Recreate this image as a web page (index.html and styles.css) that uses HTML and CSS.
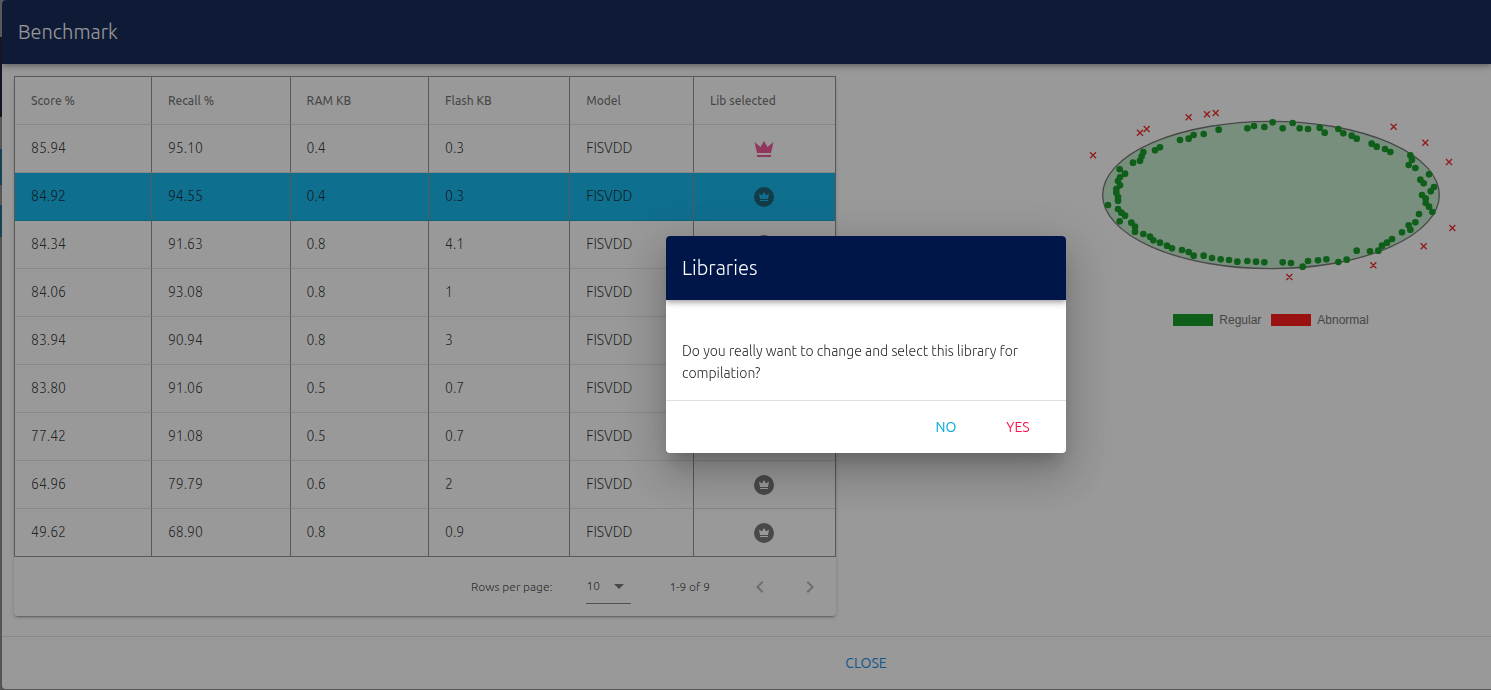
FILE: index.html
```html
<!DOCTYPE html>
<html lang="en">
<head>
<meta charset="utf-8">
<title>Benchmark</title>
<link rel="stylesheet" href="styles.css">
</head>
<body>
<svg class="sprite" aria-hidden="true">
  <symbol id="crown" viewBox="0 0 24 24"><path d="M5 16 2.500 5 8.500 10 12 4 15.500 10 21.500 5 19 16ZM5 18H19V20H5Z"/></symbol>
  <symbol id="crown-circle" viewBox="0 0 24 24"><path fill-rule="evenodd" d="M12 2A10 10 0 1 1 12 22A10 10 0 1 1 12 2ZM8 14H16L17 8.500 14 10.500 12 7 10 10.500 7 8.500ZM8 15V16H16V15Z"/></symbol>
</svg>
<main class="page">
  <section class="dialog">
    <header class="bar"><h1 class="title">Benchmark</h1></header>
    <div class="content">
      <div class="card">
        <table class="grid">
          <colgroup><col class="c1"><col class="c2"><col class="c3"><col class="c4"><col class="c5"><col class="c6"></colgroup>
          <thead><tr><th>Score %</th><th>Recall %</th><th>RAM KB</th><th>Flash KB</th><th>Model</th><th>Lib selected</th></tr></thead>
          <tbody>
            <tr><td>85.94</td><td>95.10</td><td>0.4</td><td>0.3</td><td>FISVDD</td><td class="pick"><svg class="icon chosen"><use href="#crown"/></svg></td></tr>
            <tr class="active"><td>84.92</td><td>94.55</td><td>0.4</td><td>0.3</td><td>FISVDD</td><td class="pick"><svg class="icon"><use href="#crown-circle"/></svg></td></tr>
            <tr><td>84.34</td><td>91.63</td><td>0.8</td><td>4.1</td><td>FISVDD</td><td class="pick"><svg class="icon"><use href="#crown-circle"/></svg></td></tr>
            <tr><td>84.06</td><td>93.08</td><td>0.8</td><td>1</td><td>FISVDD</td><td class="pick"><svg class="icon"><use href="#crown-circle"/></svg></td></tr>
            <tr><td>83.94</td><td>90.94</td><td>0.8</td><td>3</td><td>FISVDD</td><td class="pick"><svg class="icon"><use href="#crown-circle"/></svg></td></tr>
            <tr><td>83.80</td><td>91.06</td><td>0.5</td><td>0.7</td><td>FISVDD</td><td class="pick"><svg class="icon"><use href="#crown-circle"/></svg></td></tr>
            <tr><td>77.42</td><td>91.08</td><td>0.5</td><td>0.7</td><td>FISVDD</td><td class="pick"><svg class="icon"><use href="#crown-circle"/></svg></td></tr>
            <tr><td>64.96</td><td>79.79</td><td>0.6</td><td>2</td><td>FISVDD</td><td class="pick"><svg class="icon"><use href="#crown-circle"/></svg></td></tr>
            <tr><td>49.62</td><td>68.90</td><td>0.8</td><td>0.9</td><td>FISVDD</td><td class="pick"><svg class="icon"><use href="#crown-circle"/></svg></td></tr>
          </tbody>
        </table>
        <footer class="pager">
          <label for="rows">Rows per page:</label>
          <span class="select"><select id="rows"><option>10</option></select><svg class="caret" viewBox="0 0 10 5"><path d="M0 0H10L5 5Z"/></svg></span>
          <span class="range">1-9 of 9</span>
          <span class="arrows">
            <button class="arrow" aria-label="Previous page" disabled><svg class="icon" viewBox="0 0 24 24"><path d="M15.410 16.580 10.830 12 15.410 7.410 14 6 8 12 14 18Z"/></svg></button>
            <button class="arrow" aria-label="Next page" disabled><svg class="icon" viewBox="0 0 24 24"><path d="M8.590 16.580 13.170 12 8.590 7.410 10 6 16 12 10 18Z"/></svg></button>
          </span>
        </footer>
      </div>
      <figure class="chart">
        <svg class="plot" viewBox="3 0 1140 570" role="img" aria-label="Regular and abnormal samples">
          <ellipse class="region" cx="573" cy="285" rx="505" ry="221"/>
          <path class="dots" d="M416 89h.1M371 102h.1M341 105h.1M326 116h.1M300 120h.1M240 142h.1M225 151h.1M190 156h.1M185 169h.1M180 182h.1M159 188h.1M119 208h.1M135 221h.1M120 232h.1M114 243h.1M120 256h.1M109 267h.1M109 278h.1M114 291h.1M114 302h.1M84 315h.1M114 327h.1M124 338h.1M135 347h.1M119 364h.1M154 368h.1M165 380h.1M165 395h.1M190 402h.1M210 410h.1M220 421h.1M240 428h.1M261 437h.1M276 445h.1M306 450h.1M326 456h.1M341 467h.1M371 467h.1M396 474h.1M422 478h.1M447 480h.1M472 485h.1M502 483h.1M528 485h.1M553 487h.1M502 85h.1M522 78h.1M553 81h.1M578 67h.1M608 85h.1M638 69h.1M659 85h.1M684 87h.1M719 83h.1M734 98h.1M775 87h.1M790 100h.1M815 107h.1M830 116h.1M875 131h.1M890 140h.1M915 147h.1M931 156h.1M991 166h.1M996 179h.1M986 195h.1M1006 204h.1M1047 223h.1M1021 239h.1M1031 250h.1M1062 261h.1M1052 274h.1M1026 285h.1M1037 296h.1M1037 309h.1M1047 320h.1M1057 336h.1M1017 342h.1M1006 367h.1M986 376h.1M991 389h.1M966 397h.1M936 417h.1M921 428h.1M906 437h.1M895 452h.1M870 454h.1M830 452h.1M800 479h.1M775 486h.1M739 478h.1M714 481h.1M684 483h.1M668 500h.1M633 489h.1M608 487h.1"/>
          <path class="marks" d="M30 157l18 18m0-18l-18 18M171 89l18 18m0-18l-18 18M191 78l18 18m0-18l-18 18M317 43l18 18m0-18l-18 18M372 34l18 18m0-18l-18 18M398 30l18 18m0-18l-18 18M932 71l18 18m0-18l-18 18M1027 119l18 18m0-18l-18 18M1098 177l18 18m0-18l-18 18M1108 375l18 18m0-18l-18 18M1022 430l18 18m0-18l-18 18M871 487l18 18m0-18l-18 18M619 522l18 18m0-18l-18 18"/>
        </svg>
        <figcaption class="legend"><span class="key regular">Regular</span><span class="key abnormal">Abnormal</span></figcaption>
      </figure>
    </div>
    <footer class="actions"><button class="btn close">CLOSE</button></footer>
  </section>
</main>
<div class="overlay">
  <section class="modal" role="dialog" aria-labelledby="modal-title">
    <header class="bar"><h2 class="title" id="modal-title">Libraries</h2></header>
    <p class="message">Do you really want to change and select this library for compilation?</p>
    <footer class="modal-actions"><button class="btn no">NO</button><button class="btn yes">YES</button></footer>
  </section>
</div>
</body>
</html>
```
FILE: styles.css
```css
* { box-sizing: border-box; }
body {
  margin: 0;
  font: 300 14px/22px Ubuntu, "Open Sans", "Noto Sans", sans-serif;
  color: rgba(0, 0, 0, .87);
}
button, select { font: inherit; color: inherit; background: none; border: 0; padding: 0; }
.sprite { position: absolute; width: 0; height: 0; }
.page {
  min-height: 100vh;
  padding: 0 0 1px 2px;
  background: linear-gradient(#8a8a8a 37px, #0a1022 37px 117px, #868686 117px 149px, #0a6480 149px 185px, #868686 185px 205px, #0a6480 205px 237px, #808080 237px);
}
.dialog {
  display: flex;
  flex-direction: column;
  min-height: calc(100vh - 1px);
  background: #fff;
  border-radius: 4px 0 0 4px;
  overflow: hidden;
}
.bar {
  display: flex;
  align-items: center;
  height: 64px;
  padding: 0 16px;
  color: #fff;
  background: #001648;
  box-shadow: 0 2px 4px -1px rgba(0, 0, 0, .2), 0 4px 5px rgba(0, 0, 0, .14), 0 1px 10px rgba(0, 0, 0, .12);
}
.title { margin: 0; font-size: 20px; line-height: 28px; font-weight: 300; }
.content {
  flex: 1;
  display: grid;
  grid-template-columns: 822fr 643fr;
  align-items: start;
  padding: 12px 12px 20px;
}
.card {
  border-radius: 4px;
  box-shadow: 0 3px 1px -2px rgba(0, 0, 0, .2), 0 2px 2px rgba(0, 0, 0, .14), 0 1px 5px rgba(0, 0, 0, .12);
}
.grid {
  width: 100%;
  table-layout: fixed;
  border-collapse: separate;
  border-spacing: 0;
  border: 1px solid #8a8a8a;
}
.c1 { width: 16.700%; }
.c2 { width: 16.900%; }
.c3 { width: 16.900%; }
.c4 { width: 17.200%; }
.c5 { width: 15.100%; }
.c6 { width: 17.200%; }
th, td {
  height: 48px;
  padding: 0 16px;
  text-align: left;
  border-right: 1px solid #8a8a8a;
  border-bottom: 1px solid rgba(0, 0, 0, .12);
}
th { font-size: 12px; font-weight: 500; color: rgba(0, 0, 0, .6); }
td { padding-bottom: 1px; }
th:last-child, td:last-child { border-right: 0; }
tbody tr:last-child td { height: 47px; border-bottom: 0; }
.active td { background: #00b2ec; }
.pick { padding-bottom: 0; text-align: center; }
.icon { display: inline-block; width: 24px; height: 24px; vertical-align: middle; fill: currentColor; }
.pick .icon { color: #6c6c6c; }
.active .pick .icon { color: #0b5468; }
.pick .chosen { color: #f04a94; }
.pager {
  display: flex;
  align-items: center;
  justify-content: flex-end;
  height: 59px;
  padding-right: 8px;
  font-size: 12px;
  color: rgba(0, 0, 0, .87);
}
.select {
  display: flex;
  align-items: center;
  width: 45px;
  height: 34px;
  margin: 0 38px 0 34px;
  border-bottom: 1px solid #7a7a7a;
}
.select select { appearance: none; width: 28px; }
.caret { width: 10px; height: 5px; fill: #6c6c6c; }
.arrows { display: flex; gap: 14px; margin-left: 32px; }
.arrow { width: 36px; height: 36px; color: #b0b0b0; }
.chart {
  justify-self: end;
  width: 380px;
  max-width: 100%;
  margin: 24px 18px 0 0;
}
.plot { display: block; width: 100%; }
.region { fill: #c2eccb; stroke: #6c6c6c; stroke-width: 4; }
.dots { fill: none; stroke: #009216; stroke-width: 20; stroke-linecap: round; }
.marks { fill: none; stroke: #f01818; stroke-width: 4; }
.legend {
  display: flex;
  justify-content: center;
  gap: 10px;
  margin-top: 20px;
  font: 12px/20px "Liberation Sans", Arial, sans-serif;
  color: #666;
}
.key { display: flex; align-items: center; gap: 6px; }
.key::before { content: ""; width: 40px; height: 12px; background: #009216; }
.abnormal::before { background: #ff0404; }
.actions {
  display: flex;
  justify-content: center;
  padding: 8px 0 8px 239px;
  border-top: 1px solid rgba(0, 0, 0, .12);
}
.btn { min-width: 64px; height: 36px; font-weight: 400; }
.close { color: #0284e8; }
.no { color: #00a8d8; }
.yes { color: #ff1450; }
.overlay {
  position: fixed;
  inset: 0;
  display: flex;
  align-items: center;
  justify-content: center;
  padding: 0 0 1px 241px;
  background: rgba(33, 33, 33, .46);
}
.modal {
  width: 400px;
  background: #fff;
  border-radius: 4px;
  overflow: hidden;
  box-shadow: 0 11px 15px -7px rgba(0, 0, 0, .2), 0 24px 38px 3px rgba(0, 0, 0, .14), 0 9px 46px 8px rgba(0, 0, 0, .12);
}
.message { margin: 0; padding: 40px 16px 16px; }
.modal-actions {
  display: flex;
  justify-content: flex-end;
  gap: 8px;
  padding: 8px 16px;
  border-top: 1px solid rgba(0, 0, 0, .12);
}
```
